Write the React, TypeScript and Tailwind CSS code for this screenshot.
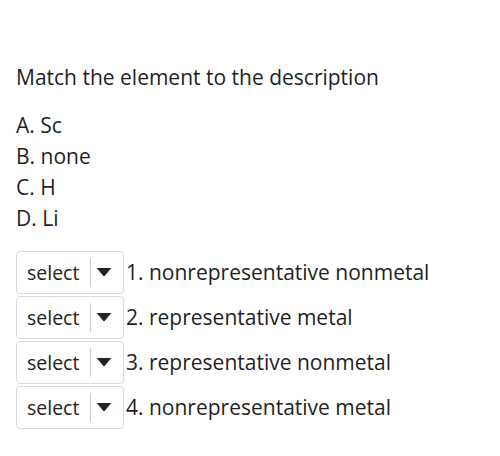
import React from 'react';

const options = ['A. Sc', 'B. none', 'C. H', 'D. Li'];
const rows = [
  '1. nonrepresentative nonmetal',
  '2. representative metal',
  '3. representative nonmetal',
  '4. nonrepresentative metal',
];

const SelectBox: React.FC = () => (
  <div className="flex items-center h-[43px] w-[108px] shrink-0 border border-[#d9d9d9] rounded-[4px] bg-white">
    <span className="pl-[10px] pr-[11px] text-[19.5px] text-[#222]">select</span>
    <span className="w-px h-[29px] bg-[#cccccc]" />
    <svg width="14" height="9" viewBox="0 0 14 9" className="ml-[6px]">
      <path d="M0.5 0.5 H13.5 L7 8 Z" fill="#222" stroke="#222" strokeLinejoin="round" />
    </svg>
  </div>
);

export default function App() {
  return (
    <div className="bg-white w-[500px] h-[456px] px-4 pt-[62px] text-[#1f1f1f] font-['Open_Sans',sans-serif] text-[21px]">
      <h2 className="text-[21px] leading-[30px] mb-[18px]">Match the element to the description</h2>
      <ul className="flex flex-col">
        {options.map((o) => (
          <li key={o} className="leading-[31px]">{o}</li>
        ))}
      </ul>
      <div className="flex flex-col gap-[2px] mt-[17px]">
        {rows.map((r) => (
          <div key={r} className="flex items-center gap-[2px]">
            <SelectBox />
            <span>{r}</span>
          </div>
        ))}
      </div>
    </div>
  );
}
